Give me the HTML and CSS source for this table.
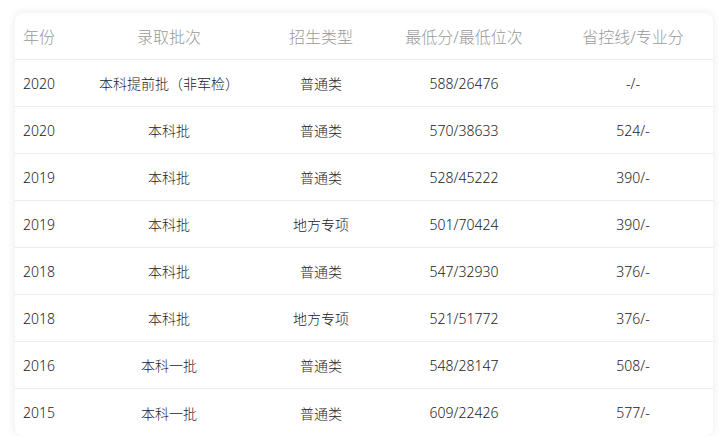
FILE: index.html
```html
<!DOCTYPE html>
<html lang="zh">
<head>
<meta charset="utf-8">
<link rel="stylesheet" href="styles.css">
</head>
<body>
<div class="card">
  <div class="row head">
    <div class="c1">年份</div><div class="c">录取批次</div><div class="c">招生类型</div><div class="c">最低分/最低位次</div><div class="c">省控线/专业分</div>
  </div>
  <div class="row"><div class="c1">2020</div><div class="c">本科提前批（非军检）</div><div class="c">普通类</div><div class="c">588/26476</div><div class="c">-/-</div></div>
  <div class="row"><div class="c1">2020</div><div class="c">本科批</div><div class="c">普通类</div><div class="c">570/38633</div><div class="c">524/-</div></div>
  <div class="row"><div class="c1">2019</div><div class="c">本科批</div><div class="c">普通类</div><div class="c">528/45222</div><div class="c">390/-</div></div>
  <div class="row"><div class="c1">2019</div><div class="c">本科批</div><div class="c">地方专项</div><div class="c">501/70424</div><div class="c">390/-</div></div>
  <div class="row"><div class="c1">2018</div><div class="c">本科批</div><div class="c">普通类</div><div class="c">547/32930</div><div class="c">376/-</div></div>
  <div class="row"><div class="c1">2018</div><div class="c">本科批</div><div class="c">地方专项</div><div class="c">521/51772</div><div class="c">376/-</div></div>
  <div class="row"><div class="c1">2016</div><div class="c">本科一批</div><div class="c">普通类</div><div class="c">548/28147</div><div class="c">508/-</div></div>
  <div class="row last"><div class="c1">2015</div><div class="c">本科一批</div><div class="c">普通类</div><div class="c">609/22426</div><div class="c">577/-</div></div>
</div>
</body>
</html>
```
FILE: styles.css
```css
html, body {
  margin: 0;
  padding: 0;
  background: #ffffff;
}
body {
  padding: 13px 0 0 15px;
  font-family: "Noto Sans", "Noto Sans CJK SC", sans-serif;
}
.card {
  width: 698px;
  background: #fff;
  border-radius: 8px;
  box-shadow: 0 0 10px rgba(0, 0, 0, 0.09);
  overflow: hidden;
}
.row {
  display: grid;
  grid-template-columns: 56px 196px 108px 178px 160px;
  height: 47px;
  align-items: center;
  border-bottom: 1px solid #ebebeb;
  box-sizing: border-box;
  font-size: 14px;
  font-weight: 300;
  color: #222;
}
.row.last {
  border-bottom: none;
}
.head {
  font-size: 16px;
  color: #999;
  padding-bottom: 1px;
}
.c1 {
  padding-left: 8px;
  white-space: nowrap;
}
.c {
  text-align: center;
  white-space: nowrap;
}
```
